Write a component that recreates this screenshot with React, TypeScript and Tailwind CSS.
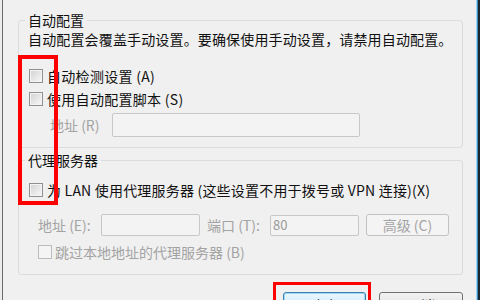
const cjk = { fontFamily: '"Noto Sans CJK SC", "Noto Sans", sans-serif' }

function Box({ disabled = false }: { disabled?: boolean }) {
  return (
    <span
      className={
        disabled
          ? "inline-block w-[14px] h-[14px] border border-[#bcbcbc] bg-[#f4f4f4] shrink-0"
          : "inline-block w-[14px] h-[14px] border border-[#8e8f8f] bg-gradient-to-br from-[#d2d2d2] to-[#f8f8f8] shadow-[inset_0_0_0_1px_#f4f4f4] shrink-0"
      }
    />
  )
}

function Group({ title, children, className }: { title: string; children: React.ReactNode; className?: string }) {
  return (
    <fieldset className={"border border-[#d9dde0] rounded-[3px] pl-[10px] pr-[8px] " + (className ?? "")}>
      <legend className="-ml-[4px] px-[3px] text-[14px] leading-[16px] text-[#111]">{title}</legend>
      {children}
    </fieldset>
  )
}

export default function App() {
  return (
    <div className="w-[480px] h-[300px] overflow-hidden flex bg-[#f0f0f0] relative" style={cjk}>
      <div className="w-[2px] bg-[#ececec]" />
      <div className="w-px bg-[#6a6a6a]" />
      <div className="flex-1 flex flex-col pl-[15px] pr-[13px] pt-[12px]">
        <Group title="自动配置" className="pb-[10px]">
          <div className="mt-[3px] text-[14px] leading-[16px] text-[#111] whitespace-nowrap -ml-[1px] tracking-[0.15px]">
            自动配置会覆盖手动设置。要确保使用手动设置，请禁用自动配置。
          </div>
          <div className="mt-[21px] flex items-center gap-[4px] h-[16px] text-[14px] text-[#111]">
            <Box />
            <span className="tracking-[0.3px]">自动检测设置 (A)</span>
          </div>
          <div className="mt-[7px] flex items-center gap-[4px] h-[16px] text-[14px] text-[#111]">
            <Box />
            <span className="tracking-[0.3px]">使用自动配置脚本 (S)</span>
          </div>
          <div className="mt-[6px] flex items-center h-[24px] text-[14px] text-[#a3a3a3]">
            <span className="ml-[21px] w-[62px]">地址 (R)</span>
            <div className="w-[248px] h-[24px] border border-[#c7c7c7] rounded-[2px] bg-[#f3f3f3]" />
          </div>
        </Group>

        <Group title="代理服务器" className="mt-[4px] pb-[14px]">
          <div className="mt-[14px] flex items-center gap-[4px] h-[16px] text-[14px] text-[#111] whitespace-nowrap">
            <Box />
            <span className="tracking-[0.2px]">为 LAN 使用代理服务器 (这些设置不用于拨号或 VPN 连接)(X)</span>
          </div>
          <div className="mt-[16px] flex items-center h-[22px] text-[14px] text-[#a3a3a3] whitespace-nowrap">
            <span className="ml-[9px] w-[63px]">地址 (E):</span>
            <div className="w-[99px] h-[22px] border border-[#c7c7c7] rounded-[2px] bg-[#f3f3f3]" />
            <span className="ml-[7px] w-[63px]">端口 (T):</span>
            <div className="w-[89px] h-[21px] border border-[#c7c7c7] rounded-[2px] bg-[#f3f3f3] flex items-center pl-[2px] text-[13px] text-[#9a9a9a]">
              80
            </div>
            <div className="ml-[7px] w-[83px] h-[22px] border border-[#c2c2c2] rounded-[3px] bg-[#f4f4f4] flex items-center justify-center text-[14px] text-[#a3a3a3]">
              高级 (C)
            </div>
          </div>
          <div className="mt-[8px] flex items-center gap-[3px] h-[16px] text-[14px] text-[#a3a3a3] whitespace-nowrap">
            <span className="ml-[9px] flex"><Box disabled /></span>
            <span>跳过本地地址的代理服务器 (B)</span>
          </div>
        </Group>

        <div className="mt-[17px] flex justify-end gap-[13px]">
          <div className="w-[83px] h-[23px] border border-[#3c7fb1] rounded-[3px] bg-gradient-to-b from-[#eaf6fd] to-[#bee6fd] shadow-[inset_0_0_0_1px_#9cd9f9] flex items-start justify-center text-[14px] leading-[16px] text-[#111] pt-[4px]">
            确定
          </div>
          <div className="w-[84px] h-[23px] border border-[#707070] rounded-[3px] bg-gradient-to-b from-[#f2f2f2] to-[#dddddd] flex items-start justify-center text-[14px] leading-[16px] text-[#111] pt-[4px]">
            取消
          </div>
        </div>
      </div>
      <div className="w-px bg-[#9fd3f0]" />
      <div className="w-px bg-[#3a8fc7]" />
      <div className="w-[2px] bg-[#1c2630]" />

      {/* red highlight marks */}
      <div className="absolute left-[18px] top-[55px] w-[40px] h-[150px] border-[4px] border-[#ff0000]" />
      <div className="absolute left-[273px] top-[282px] w-[98px] h-[30px] border-[3px] border-[#ff0000]" />
    </div>
  )
}
